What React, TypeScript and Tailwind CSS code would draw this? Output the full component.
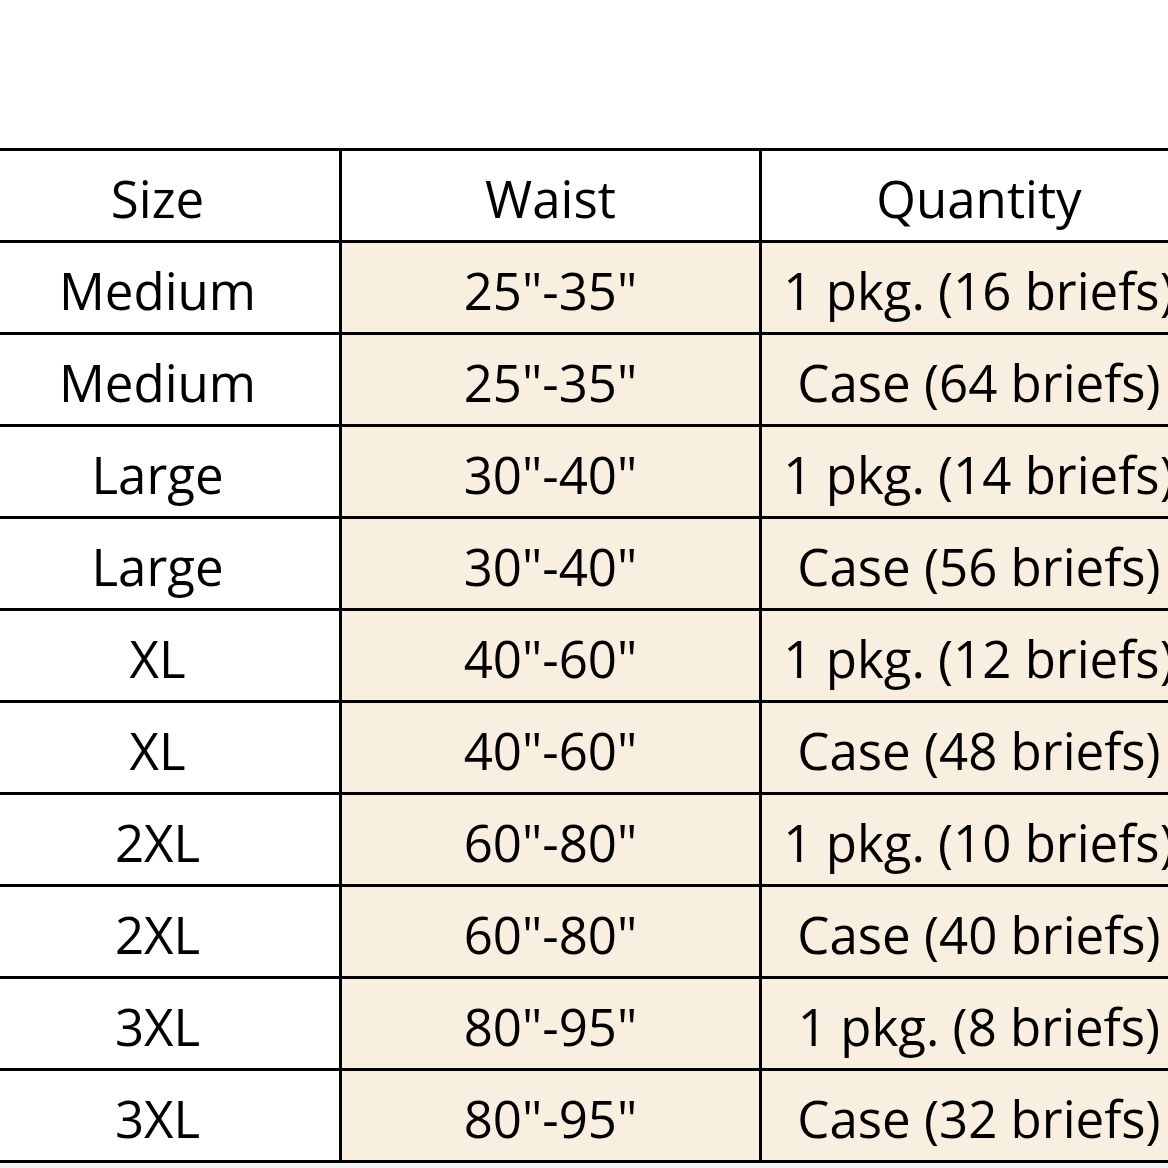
import React from "react";

const rows: [string, string, string][] = [
  ["Medium", '25"-35"', "1 pkg. (16 briefs)"],
  ["Medium", '25"-35"', "Case (64 briefs)"],
  ["Large", '30"-40"', "1 pkg. (14 briefs)"],
  ["Large", '30"-40"', "Case (56 briefs)"],
  ["XL", '40"-60"', "1 pkg. (12 briefs)"],
  ["XL", '40"-60"', "Case (48 briefs)"],
  ["2XL", '60"-80"', "1 pkg. (10 briefs)"],
  ["2XL", '60"-80"', "Case (40 briefs)"],
  ["3XL", '80"-95"', "1 pkg. (8 briefs)"],
  ["3XL", '80"-95"', "Case (32 briefs)"],
];

const cell =
  "flex h-[92px] items-center justify-center whitespace-nowrap border-b-[3px] border-r-[3px] border-black pt-[6px]";

const App = () => {
  return (
    <div
      className="min-h-screen w-full overflow-hidden bg-white text-[51px] leading-none text-black"
      style={{ fontFamily: '"Open Sans", "Noto Sans", sans-serif' }}
    >
      <div className="h-[148px]" />
      <div className="ml-[-24px] grid w-[1223px] grid-cols-[366px_420px_437px] border-t-[3px] border-black">
        <div className={cell}>Size</div>
        <div className={cell}>Waist</div>
        <div className={cell}>Quantity</div>
        {rows.map(([size, waist, qty], i) => (
          <React.Fragment key={i}>
            <div className={cell}>{size}</div>
            <div className={`${cell} bg-[#f9efe1]`}>{waist}</div>
            <div className={`${cell} bg-[#f9efe1]`}>{qty}</div>
          </React.Fragment>
        ))}
      </div>
      <div className="h-[10px] bg-[#f3f3f3]" />
    </div>
  );
};

export default App;
